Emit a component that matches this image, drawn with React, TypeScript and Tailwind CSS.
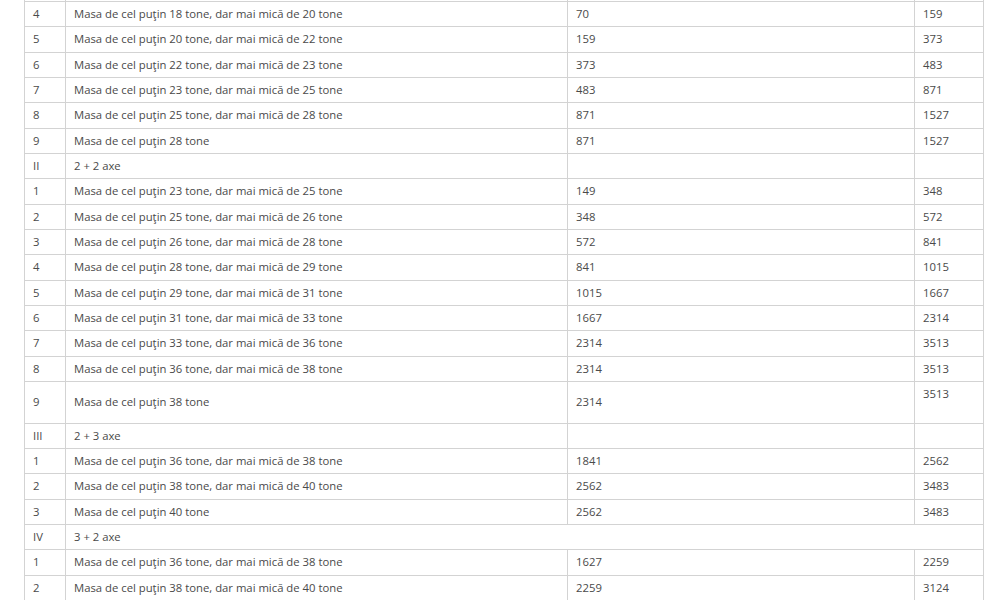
import React from "react";

type Row =
  | { kind: "row"; n: string; text: string; a: string; b: string; tall?: boolean }
  | { kind: "section"; n: string; text: string; span?: boolean }
  | { kind: "blank" };

const rows: Row[] = [
  { kind: "blank" },
  { kind: "row", n: "4", text: "Masa de cel puţin 18 tone, dar mai mică de 20 tone", a: "70", b: "159" },
  { kind: "row", n: "5", text: "Masa de cel puţin 20 tone, dar mai mică de 22 tone", a: "159", b: "373" },
  { kind: "row", n: "6", text: "Masa de cel puţin 22 tone, dar mai mică de 23 tone", a: "373", b: "483" },
  { kind: "row", n: "7", text: "Masa de cel puţin 23 tone, dar mai mică de 25 tone", a: "483", b: "871" },
  { kind: "row", n: "8", text: "Masa de cel puţin 25 tone, dar mai mică de 28 tone", a: "871", b: "1527" },
  { kind: "row", n: "9", text: "Masa de cel puţin 28 tone", a: "871", b: "1527" },
  { kind: "section", n: "II", text: "2 + 2 axe" },
  { kind: "row", n: "1", text: "Masa de cel puţin 23 tone, dar mai mică de 25 tone", a: "149", b: "348" },
  { kind: "row", n: "2", text: "Masa de cel puţin 25 tone, dar mai mică de 26 tone", a: "348", b: "572" },
  { kind: "row", n: "3", text: "Masa de cel puţin 26 tone, dar mai mică de 28 tone", a: "572", b: "841" },
  { kind: "row", n: "4", text: "Masa de cel puţin 28 tone, dar mai mică de 29 tone", a: "841", b: "1015" },
  { kind: "row", n: "5", text: "Masa de cel puţin 29 tone, dar mai mică de 31 tone", a: "1015", b: "1667" },
  { kind: "row", n: "6", text: "Masa de cel puţin 31 tone, dar mai mică de 33 tone", a: "1667", b: "2314" },
  { kind: "row", n: "7", text: "Masa de cel puţin 33 tone, dar mai mică de 36 tone", a: "2314", b: "3513" },
  { kind: "row", n: "8", text: "Masa de cel puţin 36 tone, dar mai mică de 38 tone", a: "2314", b: "3513" },
  { kind: "row", n: "9", text: "Masa de cel puţin 38 tone", a: "2314", b: "3513", tall: true },
  { kind: "section", n: "III", text: "2 + 3 axe" },
  { kind: "row", n: "1", text: "Masa de cel puţin 36 tone, dar mai mică de 38 tone", a: "1841", b: "2562" },
  { kind: "row", n: "2", text: "Masa de cel puţin 38 tone, dar mai mică de 40 tone", a: "2562", b: "3483" },
  { kind: "row", n: "3", text: "Masa de cel puţin 40 tone", a: "2562", b: "3483" },
  { kind: "section", n: "IV", text: "3 + 2 axe", span: true },
  { kind: "row", n: "1", text: "Masa de cel puţin 36 tone, dar mai mică de 38 tone", a: "1627", b: "2259" },
  { kind: "row", n: "2", text: "Masa de cel puţin 38 tone, dar mai mică de 40 tone", a: "2259", b: "3124" },
  { kind: "blank" },
];

const td =
  "border border-[#d3d3d3] px-[8px] py-[4px] leading-[16.33px] align-middle text-left";

export default function App() {
  return (
    <div
      className="w-[1000px] h-[600px] overflow-hidden bg-white"
      style={{ fontFamily: '"Open Sans", "Noto Sans", sans-serif' }}
    >
      <div className="pl-[24px] mt-[-24.3px]">
        <table className="table-fixed border-collapse w-[959px] text-[11.3px] text-[#4a4a4a]">
          <colgroup>
            <col className="w-[41px]" />
            <col className="w-[502px]" />
            <col className="w-[347px]" />
            <col className="w-[69px]" />
          </colgroup>
          <tbody>
            {rows.map((r, i) =>
              r.kind === "blank" ? (
                <tr key={i}>
                  <td className={td}>&nbsp;</td>
                  <td className={td}>&nbsp;</td>
                  <td className={td}>&nbsp;</td>
                  <td className={td}>&nbsp;</td>
                </tr>
              ) : r.kind === "row" ? (
                <tr key={i}>
                  <td className={td}>{r.n}</td>
                  <td className={td}>{r.text}</td>
                  <td className={td}>{r.a}</td>
                  <td className={td}>
                    {r.b}
                    {r.tall ? (
                      <>
                        <br />
                        &nbsp;
                      </>
                    ) : null}
                  </td>
                </tr>
              ) : r.span ? (
                <tr key={i}>
                  <td className={td}>{r.n}</td>
                  <td className={td} colSpan={3}>
                    {r.text}
                  </td>
                </tr>
              ) : (
                <tr key={i}>
                  <td className={td}>{r.n}</td>
                  <td className={td}>{r.text}</td>
                  <td className={td}>&nbsp;</td>
                  <td className={td}>&nbsp;</td>
                </tr>
              )
            )}
          </tbody>
        </table>
      </div>
    </div>
  );
}
